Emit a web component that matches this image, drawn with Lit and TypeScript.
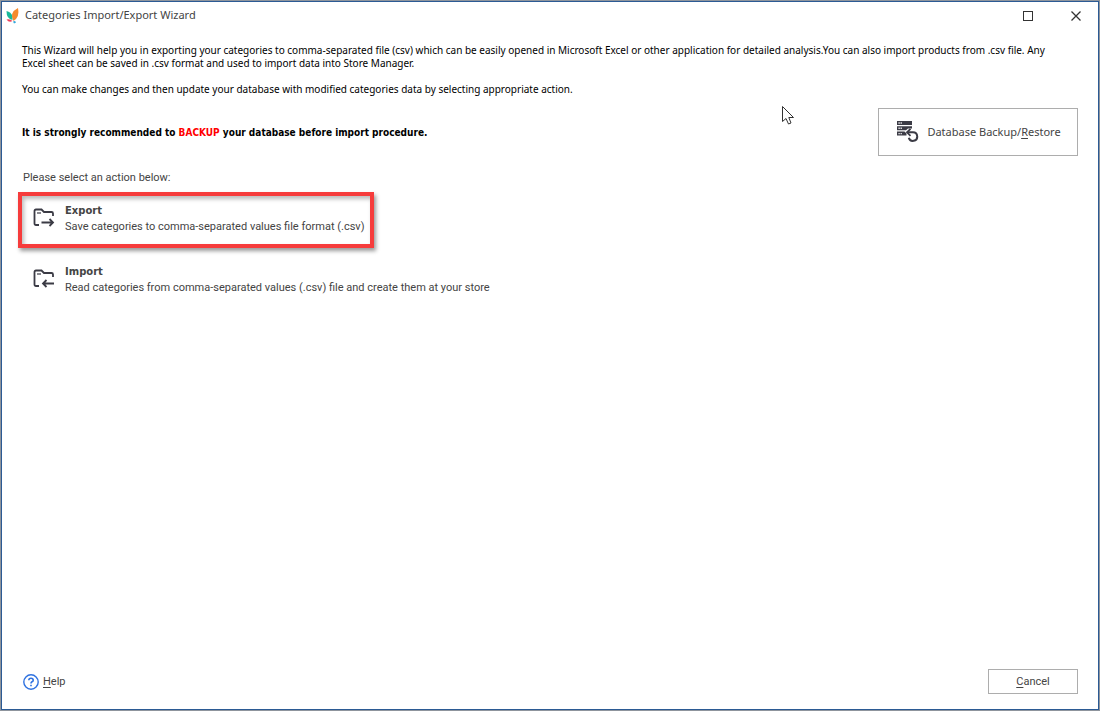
import { LitElement, html, css, svg } from "lit";
import { customElement } from "lit/decorators.js";

const ARROW_OUT = "M8.500 14.500H20M16.500 11L20 14.500L16.500 18";
const ARROW_IN = "M21 14.500H10M13.500 11L10 14.500L13.500 18";

const folder = (arrow: string) => html`<svg class="folder" viewBox="0 0 22 20" width="22" height="20" fill="none" stroke="#3b3b45" stroke-width="1.800" aria-hidden="true">
  ${svg`<path d="M6 17H3Q1.500 17 1.500 15.500V3Q1.500 1.500 3 1.500H8.500L11 4H18.500Q20 4 20 5.500V8" />
  <path d="M4 5H8" stroke-width="1.200" />
  <path d=${arrow} />`}
</svg>`;

@customElement("app-root")
export class AppRoot extends LitElement {
  static styles = css`
    :host {
      display: block;
      color: #444;
      font: 11px/13px Roboto, "Liberation Sans", sans-serif;
    }
    * { box-sizing: border-box; }
    svg { display: block; flex: none; }
    button {
      font: inherit;
      color: inherit;
      background: #fff;
      border: 1px solid #adadad;
      padding: 0;
    }
    u { text-underline-offset: 2px; }
    .window {
      display: flex;
      flex-direction: column;
      min-height: 100vh;
      background: #fff;
      border: 1px solid #8f959d;
      box-shadow: inset 0 0 0 1px #2b5a94;
    }
    .titlebar {
      display: flex;
      align-items: center;
      height: 29px;
      padding: 0 13px 0 5px;
    }
    .title {
      flex: 1;
      margin: 0 0 2px 5px;
      font: 11px/16px "Noto Sans", "Open Sans", sans-serif;
    }
    .controls { display: flex; gap: 28px; }
    .control {
      display: grid;
      place-items: center;
      width: 20px;
      height: 20px;
      border: 0;
    }
    .content { flex: 1; padding: 1px 21px 0; }
    .intro {
      margin: 13px 0 0;
      padding-right: 8px;
      color: #000;
      font-family: "Noto Sans", sans-serif;
      font-size: 10px;
    }
    .row {
      display: flex;
      justify-content: space-between;
      align-items: center;
      margin-top: 12px;
    }
    .warning {
      margin: 0;
      color: #000;
      font: bold 10px/13px "DejaVu Sans Condensed", "DejaVu Sans", sans-serif;
    }
    .warning em { font-style: normal; color: #f00; }
    .backup {
      display: flex;
      align-items: center;
      justify-content: center;
      gap: 8px;
      width: 200px;
      height: 48px;
      padding-bottom: 2px;
      font-family: "Noto Sans", "Open Sans", sans-serif;
    }
    .prompt { margin: 15px 0 8px 1px; font-size: 11px; font-weight: normal; }
    .actions {
      display: flex;
      flex-direction: column;
      align-items: flex-start;
      gap: 5px;
      margin-left: -4px;
    }
    .action {
      display: flex;
      align-items: flex-start;
      gap: 10px;
      width: 356px;
      height: 56px;
      padding: 8px 10px 8px 11px;
      text-align: left;
      white-space: nowrap;
      border: 4px solid transparent;
      background: none;
    }
    .action b { font: bold 10px/13px "DejaVu Sans", sans-serif; }
    .action.selected {
      border-color: #f63c3c;
      box-shadow: 2px 3px 4px #0006, inset 2px 3px 4px #0004;
    }
    .text { display: grid; gap: 3px; }
    .folder { margin-top: 4px; }
    .footer {
      display: flex;
      justify-content: space-between;
      align-items: center;
      padding: 0 21px 16px 22px;
    }
    .help {
      display: flex;
      align-items: center;
      gap: 4px;
      color: inherit;
      text-decoration: none;
    }
    .cancel { width: 90px; height: 25px; }
    .cursor { position: absolute; left: 781px; top: 105px; }
  `;

  private action(title: string, note: string, arrow: string, selected = false) {
    return html`<button class="action ${selected ? "selected" : ""}">
      ${folder(arrow)}
      <span class="text"><b>${title}</b><span>${note}</span></span>
    </button>`;
  }

  render() {
    return html`<main class="window">
      <header class="titlebar">
        <svg viewBox="0 0 14 16" width="14" height="16" aria-hidden="true">
          <path d="M.5 3Q5 4 6.500 8L6.500 12Q.5 11 .5 3Z" fill="#19b89a" />
          <path d="M12 0Q14 9 7.500 13Q3 4.500 12 0Z" fill="#f58a2d" />
          <path d="M.5 11.500Q4 10.500 6.500 13Q3 15 .5 11.500Z" fill="#ee405b" />
          <path d="M7 13.500Q9.500 12 10 14.500L8 15.500Z" fill="#35a6dc" />
        </svg>
        <h1 class="title">Categories Import/Export Wizard</h1>
        <div class="controls">
          <button class="control" aria-label="Maximize">
            <svg width="10" height="10" viewBox="0 0 10 10"><rect x=".5" y=".5" width="9" height="9" fill="none" stroke="#333" /></svg>
          </button>
          <button class="control" aria-label="Close">
            <svg width="10" height="10" viewBox="0 0 10 10"><path d="M.5.500L9.500 9.500M9.500.500L.5 9.500" stroke="#333" stroke-width="1.300" /></svg>
          </button>
        </div>
      </header>
      <div class="content">
        <p class="intro">This Wizard will help you in exporting your categories to comma-separated file (csv) which can be easily opened in Microsoft Excel or other application for detailed analysis.You can also import products from .csv file. Any Excel sheet can be saved in .csv format and used to import data into Store Manager.</p>
        <p class="intro">You can make changes and then update your database with modified categories data by selecting appropriate action.</p>
        <div class="row">
          <p class="warning">It is strongly recommended to <em>BACKUP</em> your database before import procedure.</p>
          <button class="backup">
            <svg width="24" height="22" viewBox="0 0 24 22" aria-hidden="true">
              <path d="M2 1H17V5H2ZM2 6.300H17V8.500H13L11 10.300H2ZM2 11.600H9.500L11.500 13.500V15.600H2Z" fill="#3b3b45" />
              <path d="M3.500 3H7M3.500 8.300H7M3.500 13.600H7" stroke="#fff" stroke-width="1.400" stroke-dasharray="1.200 .9" />
              <path d="M13 12.300H18A4.300 4.300 0 1 1 13.800 17.800" fill="none" stroke="#fff" stroke-width="4" />
              <path d="M12.500 12.300H18A4.300 4.300 0 1 1 13.800 17.800" fill="none" stroke="#3b3b45" stroke-width="2" />
              <path d="M15.500 8.800L12 12.300L15.500 15.800" fill="none" stroke="#3b3b45" stroke-width="1.800" />
            </svg>
            <span>Database Backup/<u>R</u>estore</span>
          </button>
        </div>
        <h2 class="prompt">Please select an action below:</h2>
        <div class="actions">
          ${this.action("Export", "Save categories to comma-separated values file format (.csv)", ARROW_OUT, true)}
          ${this.action("Import", "Read categories from comma-separated values (.csv) file and create them at your store", ARROW_IN)}
        </div>
      </div>
      <footer class="footer">
        <a class="help" href="#help">
          <svg width="16" height="16" viewBox="0 0 16 16" fill="none" stroke="#2f72e0" aria-hidden="true">
            <circle cx="8" cy="8" r="7.200" stroke-width="1.400" />
            <path d="M5.800 6.300Q5.800 4.200 8 4.200T10.200 6.200Q10.200 7.300 9 7.800Q8 8.300 8 9.500M8 10.700V12.300" stroke-width="1.600" />
          </svg>
          <span><u>H</u>elp</span>
        </a>
        <button class="cancel"><u>C</u>ancel</button>
      </footer>
      <svg class="cursor" width="14" height="21" viewBox="0 0 14 21" aria-hidden="true">
        <path d="M1.500 1.500V16.500L5 13.500L7.500 19L10 18L7.800 12.500H12.500Z" fill="#fff" stroke="#333" />
      </svg>
    </main>`;
  }
}
